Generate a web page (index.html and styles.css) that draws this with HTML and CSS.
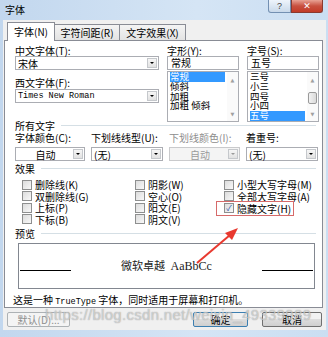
FILE: index.html
```html
<!DOCTYPE html>
<html lang="zh-CN">

<head>
    <meta charset="UTF-8">
    <title>字体</title>
    <link rel="stylesheet" href="styles.css">
</head>

<body>
    <div class="window">
        <div class="titlebar">
            <span class="title">字体</span>
            <span class="help">?</span>
            <span class="close">✕</span>
        </div>

        <div class="dialog">
            <div class="tabs">
                <div class="tab active">字体(<u>N</u>)</div>
                <div class="tab">字符间距(<u>R</u>)</div>
                <div class="tab">文字效果(<u>X</u>)</div>
            </div>

            <div class="panel">
                <div class="fonts">
                    <div class="col">
                        <div class="lbl">中文字体(<u>T</u>):</div>
                        <div class="combo"><span>宋体</span><i class="drop"></i></div>
                        <div class="lbl second">西文字体(<u>F</u>):</div>
                        <div class="combo"><span class="mono">Times New Roman</span><i class="drop"></i></div>
                    </div>
                    <div class="col">
                        <div class="lbl">字形(<u>Y</u>):</div>
                        <div class="textbox">常规</div>
                        <div class="listbox">
                            <ul>
                                <li class="sel">常规</li>
                                <li>倾斜</li>
                                <li>加粗</li>
                                <li>加粗 倾斜</li>
                            </ul>
                            <div class="scroll"><b>▲</b><b>▼</b></div>
                        </div>
                    </div>
                    <div class="col">
                        <div class="lbl">字号(<u>S</u>):</div>
                        <div class="textbox">五号</div>
                        <div class="listbox">
                            <ul>
                                <li>三号</li>
                                <li>小三</li>
                                <li>四号</li>
                                <li>小四</li>
                                <li class="sel">五号</li>
                            </ul>
                            <div class="scroll"><b>▲</b><span class="thumb"></span><b>▼</b></div>
                        </div>
                    </div>
                </div>

                <div class="group">所有文字</div>
                <div class="alltext">
                    <div class="lbl">字体颜色(<u>C</u>):</div>
                    <div class="lbl">下划线线型(<u>U</u>):</div>
                    <div class="lbl off">下划线颜色(<u>I</u>):</div>
                    <div class="lbl">着重号:</div>
                    <div class="combo center"><span>自动</span><i class="drop"></i></div>
                    <div class="combo"><span>(无)</span><i class="drop"></i></div>
                    <div class="combo center disabled"><span>自动</span><i class="drop"></i></div>
                    <div class="combo"><span>(无)</span><i class="drop"></i></div>
                </div>

                <div class="group">效果</div>
                <div class="effects">
                    <div class="chk"><i></i>删除线(<u>K</u>)</div>
                    <div class="chk"><i></i>阴影(<u>W</u>)</div>
                    <div class="chk"><i></i>小型大写字母(<u>M</u>)</div>
                    <div class="chk"><i></i>双删除线(<u>G</u>)</div>
                    <div class="chk"><i></i>空心(<u>O</u>)</div>
                    <div class="chk"><i></i>全部大写字母(<u>A</u>)</div>
                    <div class="chk"><i></i>上标(<u>P</u>)</div>
                    <div class="chk"><i></i>阳文(<u>E</u>)</div>
                    <div class="chk marked"><i>✓</i>隐藏文字(<u>H</u>)</div>
                    <div class="chk"><i></i>下标(<u>B</u>)</div>
                    <div class="chk"><i></i>阴文(<u>V</u>)</div>
                </div>

                <div class="group">预览</div>
                <div class="preview">
                    <span class="rule"></span>
                    <span class="sample">微软卓越 <em>AaBbCc</em></span>
                    <span class="rule"></span>
                </div>
                <div class="note">这是一种 <span class="mono">TrueType</span> 字体，同时适用于屏幕和打印机。</div>
            </div>

            <div class="buttons">
                <button class="btn off">默认(<u>D</u>)...</button>
                <button class="btn default">确定</button>
                <button class="btn">取消</button>
            </div>
        </div>
    </div>

    <div class="watermark">https://blog.csdn.net/weixin_49339989</div>

    <svg class="arrow" width="328" height="337" viewBox="0 0 328 337">
        <line x1="197" y1="263" x2="230" y2="235" stroke="#e8392f" stroke-width="2" />
        <polygon points="238,228 225,233 232,240" fill="#e8392f" />
    </svg>
</body>

</html>
```

FILE: styles.css
```css
body {
    margin: 0;
    width: 328px;
    height: 337px;
    overflow: hidden;
    position: relative;
    font-family: "Noto Sans CJK SC", sans-serif;
    font-size: 10px;
    line-height: 11px;
    color: #000;
    background: linear-gradient(90deg, #c2d7ee 0%, #d5e5f5 60%, #cadef2 100%);
}

u {
    text-decoration: none;
}

.window {
    display: flex;
    flex-direction: column;
    height: 337px;
}

/* 標題列 */
.titlebar {
    display: flex;
    align-items: flex-start;
    height: 20px;
}

.title {
    padding: 4px 0 0 5px;
    flex: 1;
}

.help {
    width: 21px;
    height: 12px;
    border: 1px solid #7390b2;
    border-top: none;
    border-radius: 0 0 0 3px;
    background: linear-gradient(#eef4fb, #c9d9ea);
    color: #444;
    font-size: 9px;
    line-height: 12px;
    text-align: center;
    font-family: "Liberation Sans", sans-serif;
}

.close {
    width: 30px;
    height: 12px;
    margin-right: 5px;
    border: 1px solid #8a3a30;
    border-top: none;
    border-radius: 0 0 3px 0;
    background: linear-gradient(#e8a294, #c8503f 50%, #c23b28);
    color: #fff;
    font-size: 9px;
    line-height: 12px;
    text-align: center;
    font-family: "DejaVu Sans", sans-serif;
}

.dialog {
    flex: 1;
    margin: 0 2px 7px 3px;
    background: #f0f0f0;
    display: flex;
    flex-direction: column;
}

/* 分頁 */
.tabs {
    display: flex;
    align-items: flex-end;
    height: 20px;
    padding-left: 4px;
}

.tab {
    box-sizing: border-box;
    height: 16px;
    line-height: 15px;
    border: 1px solid #898c95;
    border-bottom: none;
    margin-right: -1px;
    background: linear-gradient(#f4f4f4, #e3e3e3);
    white-space: nowrap;
    text-align: center;
}

.tab:nth-child(2) {
    width: 66px;
}

.tab:nth-child(3) {
    width: 67px;
}

.tab.active {
    width: 48px;
    height: 19px;
    line-height: 17px;
    background: #fff;
    position: relative;
    z-index: 1;
    margin-bottom: -1px;
}

.panel {
    margin-left: 1px;
    width: 319px;
    height: 268px;
    box-sizing: border-box;
    border: 1px solid #898c95;
    background: #fff;
    padding: 4px 0 0 10px;
}

.lbl {
    height: 11px;
    white-space: nowrap;
}

.lbl.off {
    color: #8d8d8d;
}

.fonts {
    display: grid;
    grid-template-columns: 144px 72px 72px;
    column-gap: 8px;
    height: 75px;
}

.lbl.second {
    margin-top: 7px;
    margin-bottom: 1px;
}

.combo {
    height: 14px;
    box-sizing: border-box;
    border: 1px solid #abadb3;
    display: flex;
    align-items: center;
    padding-left: 2px;
    background: #fff;
}

.combo span {
    flex: 1;
}

.combo.center span {
    text-align: center;
}

.drop {
    width: 10px;
    height: 10px;
    margin-right: 1px;
    box-sizing: border-box;
    border: 1px solid #c5c8cc;
    background: linear-gradient(#f6f6f6, #e2e2e2);
    position: relative;
}

.drop::after {
    content: "";
    position: absolute;
    left: 2px;
    top: 3px;
    border-left: 2px solid transparent;
    border-right: 2px solid transparent;
    border-top: 2px solid #000;
}

.combo.disabled {
    background: #f4f4f4;
    border-color: #c9cacc;
    color: #9a9a9a;
}

.combo.disabled .drop::after {
    border-top-color: #9a9a9a;
}

.mono {
    font-family: "Liberation Mono", monospace;
    font-size: 8.5px;
}

.textbox {
    height: 14px;
    box-sizing: border-box;
    border: 1px solid #abadb3;
    padding-left: 3px;
}

.listbox {
    margin-top: 1px;
    height: 51px;
    box-sizing: border-box;
    border: 1px solid #abadb3;
    display: flex;
}

.listbox ul {
    flex: 1;
    margin: 0;
    padding: 0 0 0 2px;
    list-style: none;
    font-size: 9.5px;
    line-height: 9.8px;
}

.listbox li {
    height: 9.8px;
}

.listbox li.sel {
    background: #3399ff;
    color: #fff;
    margin-right: 2px;
}

.scroll {
    width: 11px;
    display: flex;
    flex-direction: column;
    align-items: center;
    justify-content: space-between;
    padding: 6px 0 4px;
    background: #fafafa;
}

.scroll b {
    font-size: 5px;
    line-height: 5px;
    font-weight: normal;
    color: #a0a0a0;
    font-family: "DejaVu Sans", sans-serif;
}

.thumb {
    width: 9px;
    height: 12px;
    box-sizing: border-box;
    border: 1px solid #9a9a9a;
    border-radius: 2px;
    background: linear-gradient(90deg, #f2f2f2, #dadada);
}

/* 分組標題 */
.group {
    display: flex;
    align-items: center;
    height: 11px;
    margin-right: 6px;
}

.group::after {
    content: "";
    flex: 1;
    height: 1px;
    margin-left: 6px;
    background: #d5dfe5;
}

.alltext {
    display: grid;
    grid-template-columns: 70px 72px 71px 72px;
    grid-template-rows: 14px 14px;
    column-gap: 6px;
    row-gap: 1px;
    margin-top: 1px;
    height: 31px;
}

.effects {
    display: grid;
    grid-template-columns: 113px 89px auto;
    grid-auto-rows: 11.5px;
    padding-left: 7px;
    margin-top: 5px;
    height: 49px;
}

.chk {
    display: flex;
    align-items: center;
    white-space: nowrap;
}

.chk i {
    width: 8px;
    height: 8px;
    margin-right: 3px;
    border: 1px solid #8e8f8f;
    background: linear-gradient(135deg, #dcdcdc, #f8f8f8);
    font-style: normal;
    font-size: 8px;
    line-height: 8px;
    color: #2a50a8;
    text-align: center;
}

.chk.marked {
    outline: 1px solid #d66a6a;
    outline-offset: 1px;
    width: 68px;
    margin-left: -6px;
    padding-left: 6px;
    margin-top: 1px;
}

.preview {
    margin: 4px 0 0 3px;
    width: 297px;
    height: 46px;
    box-sizing: border-box;
    border: 1px solid #828790;
    display: flex;
    align-items: center;
    justify-content: space-between;
    padding: 0 1px;
}

.rule {
    width: 51px;
    height: 1px;
    background: #000;
    margin-top: 8px;
}

.sample {
    font-size: 11px;
    color: #222;
}

.sample em {
    font-style: normal;
    font-family: "Liberation Serif", serif;
    font-size: 12px;
    margin-left: 3px;
}

.note {
    margin: 5px 0 0 -2px;
    white-space: nowrap;
}

/* 按鈕 */
.buttons {
    display: flex;
    padding: 4px 4px 0 4px;
}

.btn {
    height: 15px;
    padding: 0;
    border: 1px solid #707070;
    border-radius: 2px;
    background: linear-gradient(#f2f2f2 50%, #dddddd 50%, #cfcfcf);
    font-family: "Noto Sans CJK SC", sans-serif;
    font-size: 10px;
    line-height: 11px;
    color: #000;
    width: 60px;
}

.btn.off {
    width: 63px;
    color: #8d8d8d;
    border-color: #adb2b5;
    background: #f4f4f4;
    margin-right: auto;
}

.btn.default {
    width: 55px;
    margin-right: 14px;
    border-color: #3c7fb1;
}

.watermark {
    position: absolute;
    left: 45px;
    top: 309px;
    font-family: "Liberation Sans", sans-serif;
    font-size: 15px;
    letter-spacing: 0.3px;
    color: rgba(255, 255, 255, 0.5);
    text-shadow: 0 0 1px rgba(110, 110, 110, 0.8);
    white-space: nowrap;
}

.arrow {
    position: absolute;
    left: 0;
    top: 0;
}
```
